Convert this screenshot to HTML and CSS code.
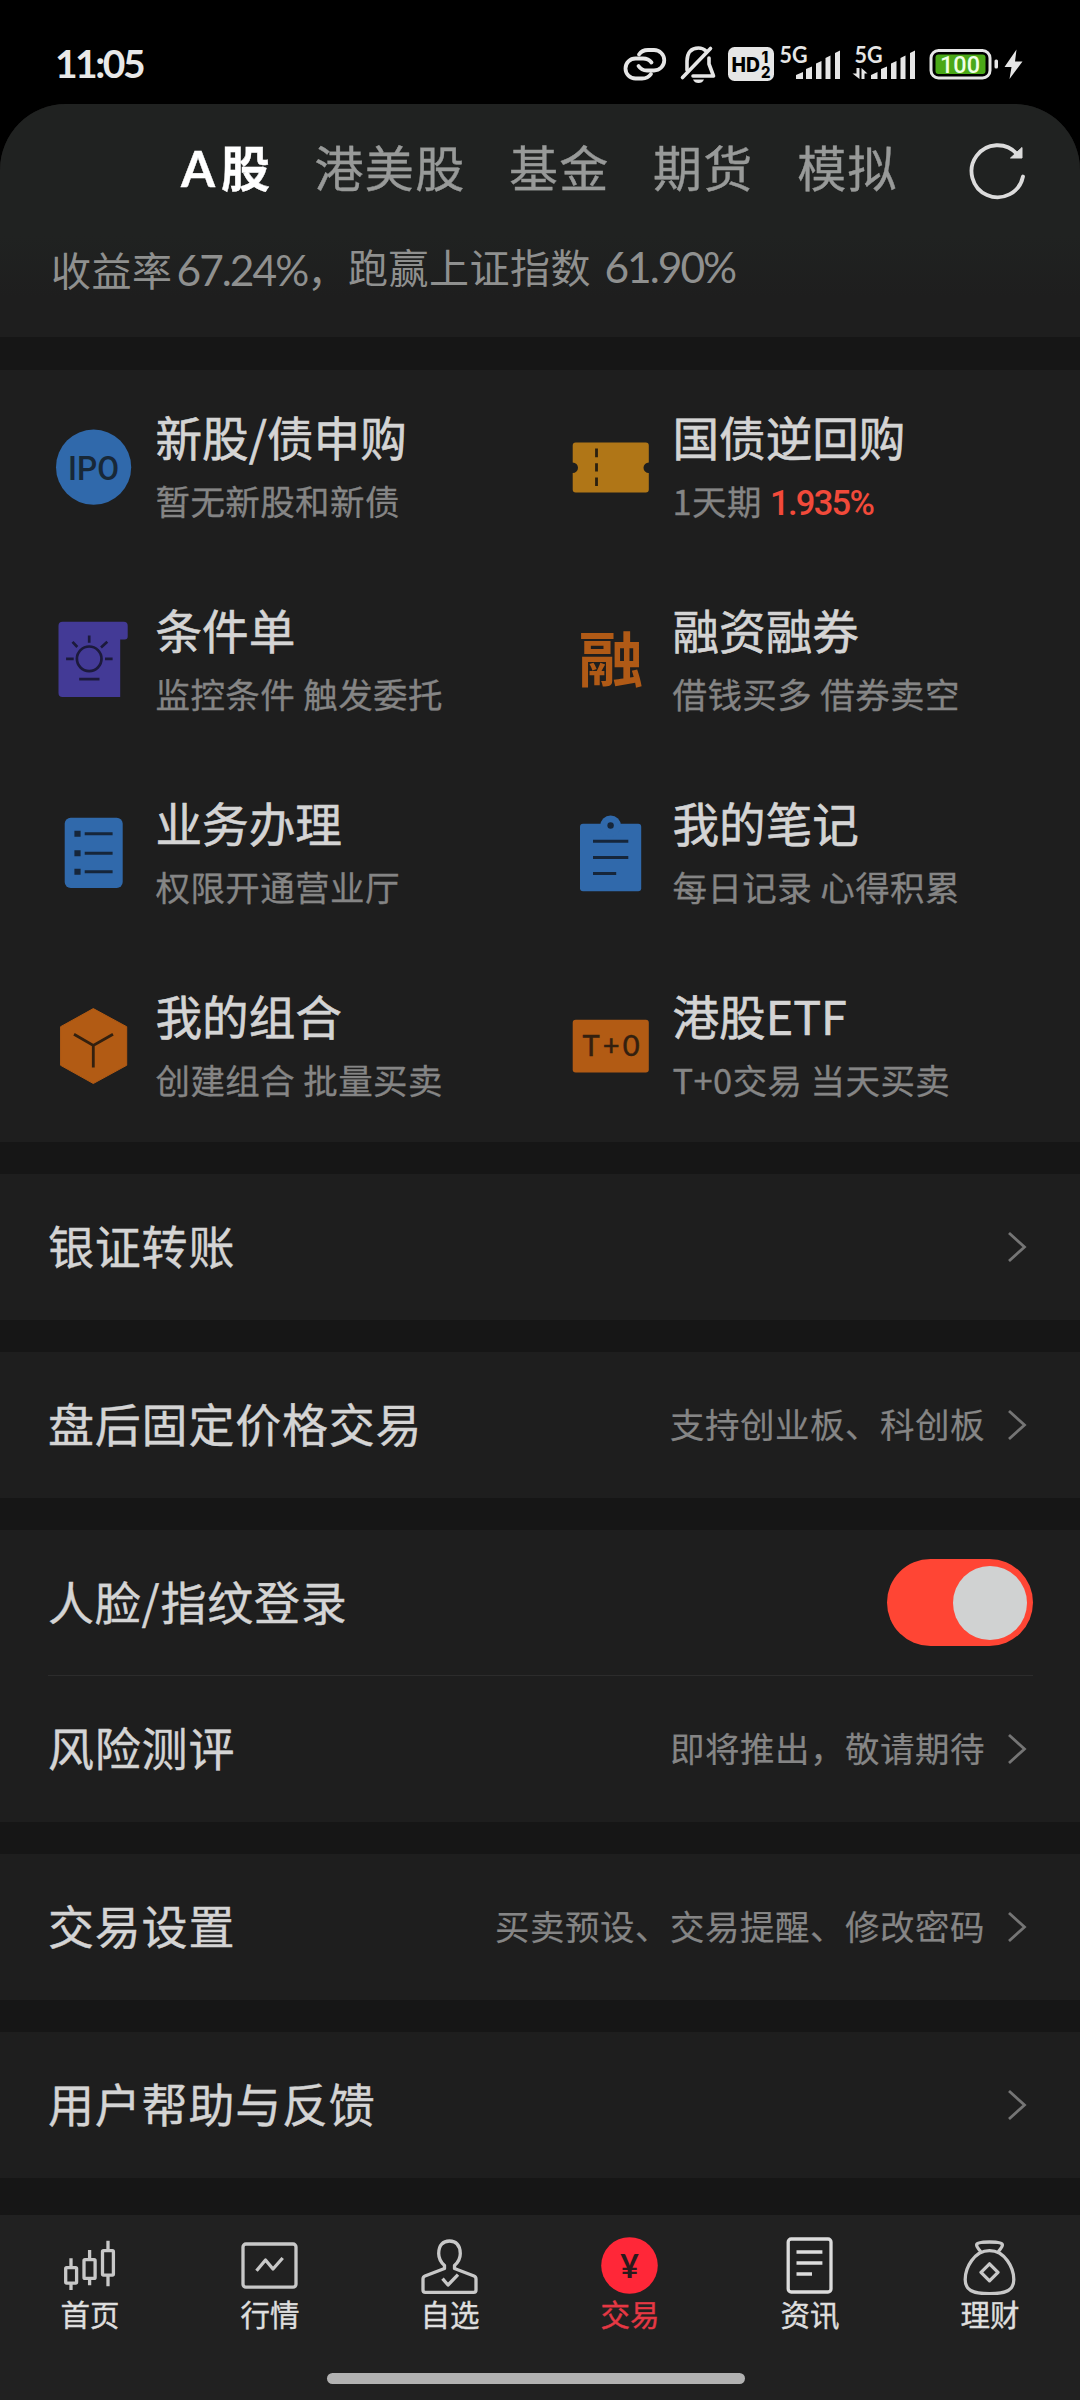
FILE: index.html
```html
<!DOCTYPE html>
<html lang="zh-CN">
<head>
<meta charset="utf-8">
<title>交易</title>
<link rel="stylesheet" href="styles.css">
</head>
<body>
<div class="screen">
  <header class="status">
    <span class="clock">11:05</span>
    <svg class="status-icons" viewBox="620 40 410 50" width="410" height="50">
      <g fill="none" stroke="#e6e6e6" stroke-width="3.8" stroke-linecap="round">
        <path d="M639 54.5 Q642 50 648 50 H654 A10 10 0 0 1 654 70.500 H647 Q641.500 70.500 638.500 66"/>
        <path d="M651 74 Q648 78.500 642 78.500 H635.500 A10 10 0 0 1 635.500 58.500 H643 Q648.500 58.500 651.500 62.500"/>
      </g>
      <g fill="none" stroke="#e6e6e6" stroke-width="3.6" stroke-linecap="round" stroke-linejoin="round">
        <path d="M687 70 V61 Q687.500 48 698.500 48 Q703 48 706 51"/>
        <path d="M709 58 V64 L713.500 76 H693"/>
        <path d="M682.500 77.500 L710.500 48.500"/>
      </g>
      <path d="M693 79.500 H704 Q702.500 83 698.500 83 T693 79.500 Z" fill="#e6e6e6"/>
      <rect x="728" y="47" width="46" height="34" rx="6.500" fill="#e6e6e6"/>
      <text class="t-heavy" x="731.500" y="71.500" font-size="20.500" textLength="28.500" lengthAdjust="spacingAndGlyphs" fill="#000">HD</text>
      <text class="t-heavy" x="761.500" y="62.500" font-size="15.500" fill="#000">1</text>
      <text class="t-heavy" x="761" y="77.500" font-size="15.500" textLength="9.500" lengthAdjust="spacingAndGlyphs" fill="#000">2</text>
      <g class="t-bold" font-size="22" fill="#e6e6e6">
        <text x="779.500" y="62.500" textLength="28" lengthAdjust="spacingAndGlyphs">5G</text>
        <text x="854.500" y="62.500" textLength="28" lengthAdjust="spacingAndGlyphs">5G</text>
      </g>
      <g fill="#e6e6e6">
        <path d="M796 79 V75 L803 72 V79 Z M806 79 V69 L812 66.500 V79 Z M816 79 V63.500 L821.500 61 V79 Z M825.500 79 V58 L830.500 55.500 V79 Z M835 79 V53 L840 50.500 V79 Z"/>
        <path d="M871 79 V75 L877.500 72 V79 Z M881 79 V69 L887 66.500 V79 Z M891 79 V63.500 L896.500 61 V79 Z M900.500 79 V58 L905.500 55.500 V79 Z M910 79 V53 L915 50.500 V79 Z"/>
        <path d="M856.500 68 H859.500 V79 L852.500 73.500 H856.500 Z M861.500 68 L867.500 73.500 H864.500 V79 H861.500 Z"/>
        <rect x="994.500" y="59.500" width="3.500" height="9" rx="1.500"/>
        <path d="M1016.500 49.500 L1004.500 67 H1011.500 L1009.500 79 L1022.500 61.500 H1015 Z"/>
      </g>
      <rect x="931" y="50.500" width="59" height="27.500" rx="7.500" fill="none" stroke="#e6e6e6" stroke-width="3"/>
      <rect x="935.500" y="54.500" width="50" height="19.500" rx="3" fill="#4aa817"/>
      <text class="t-med" x="940" y="72.500" font-size="23.500" textLength="40" lengthAdjust="spacingAndGlyphs" fill="#efffe4">100</text>
    </svg>
  </header>

  <main class="panel">
    <nav class="tabs">
      <span class="tab tab-on">A股</span>
      <span class="tab">港美股</span>
      <span class="tab">基金</span>
      <span class="tab">期货</span>
      <span class="tab">模拟</span>
      <svg class="refresh" viewBox="0 0 60 60" width="60" height="60">
        <path d="M56 36.500 A26 26 0 1 1 50 14" fill="none" stroke="#dcdcdc" stroke-width="3.800" stroke-linecap="round"/>
        <path d="M55 7.500 V18 H43.500 Z" fill="#dcdcdc" stroke="#dcdcdc" stroke-width="1" stroke-linejoin="round"/>
      </svg>
    </nav>
    <div class="summary">
      <span class="gain">收益率<span class="num">67.24%</span>，</span><span class="index">跑赢上证指数 <span class="num">61.90%</span></span>
    </div>

    <section class="grid">
      <div class="cell">
        <svg class="icon" viewBox="0 0 80 80"><circle cx="39.600" cy="40.200" r="37.600" fill="#3069ab"/><text class="t-med" x="14" y="52.600" font-size="34" textLength="51" lengthAdjust="spacingAndGlyphs" fill="#182838">IPO</text></svg>
        <div class="words"><div class="title">新股/债申购</div><div class="sub">暂无新股和新债</div></div>
      </div>
      <div class="cell">
        <svg class="icon" viewBox="0 0 80 80"><path d="M4.700 15.500 H74.800 a3 3 0 0 1 3 3 V35.500 a5.300 5.300 0 0 0 0 10.600 V62.500 a3 3 0 0 1 -3 3 H4.700 a3 3 0 0 1 -3 -3 V46.100 a5.300 5.300 0 0 0 0 -10.600 V18.500 a3 3 0 0 1 3 -3 Z" fill="#b07617"/><path d="M25.500 21.500 V30.200 M25.500 36.300 V44.600 M25.500 50.500 V59" stroke="#2a2010" stroke-width="2.800"/></svg>
        <div class="words"><div class="title">国债逆回购</div><div class="sub">1天期 <span class="rate">1.935%</span></div></div>
      </div>
      <div class="cell">
        <svg class="icon" viewBox="0 0 80 80"><path d="M8.500 1.800 H69.700 a4 4 0 0 1 4 4 V16.500 a3 3 0 0 1 -3 3 H66.200 V77 H8.500 a4 4 0 0 1 -4 -4 V5.800 a4 4 0 0 1 4 -4 Z" fill="#433a96"/><g fill="none" stroke="#1c1a3c" stroke-width="2.700"><circle cx="35.200" cy="38.800" r="12.300"/><path d="M25.200 59.200 H45.500 M35.200 15.500 V22.800 M12.100 38.800 H19.700 M51 38.800 H58.600 M18.500 21.800 L23.300 27 M53.300 21.800 L47 27.500"/></g></svg>
        <div class="words"><div class="title">条件单</div><div class="sub">监控条件 触发委托</div></div>
      </div>
      <div class="cell">
        <svg class="icon" viewBox="0 0 80 80"><text class="t-cjk" transform="translate(7.500 61.800) scale(1 .93)" x="0" y="0" font-size="65" fill="#b05a16">融</text></svg>
        <div class="words"><div class="title">融资融券</div><div class="sub">借钱买多 借券卖空</div></div>
      </div>
      <div class="cell">
        <svg class="icon" viewBox="0 0 80 80"><rect x="10.700" y="4.800" width="58" height="70.200" rx="6" fill="#3069ab"/><path d="M20.400 17.800 h6.200 v6 h-6.200 Z M20.400 37.200 h6.200 v6 h-6.200 Z M20.400 55.800 h6.200 v6 h-6.200 Z" fill="#16263a"/><path d="M30.700 20.800 H58.600 M30.700 40.200 H58.600 M30.700 58.800 H58.600" stroke="#16263a" stroke-width="3"/></svg>
        <div class="words"><div class="title">业务办理</div><div class="sub">权限开通营业厅</div></div>
      </div>
      <div class="cell">
        <svg class="icon" viewBox="0 0 80 80"><rect x="9" y="10.800" width="61.200" height="67.500" rx="3" fill="#3069ab"/><circle cx="39.600" cy="12.800" r="10.400" fill="#3069ab"/><circle cx="39.600" cy="12.500" r="3.200" fill="#16263a"/><path d="M22 28.200 H57.300 M22 44.500 H57.300 M22 60.500 H45.200" stroke="#16263a" stroke-width="3"/></svg>
        <div class="words"><div class="title">我的笔记</div><div class="sub">每日记录 心得积累</div></div>
      </div>
      <div class="cell">
        <svg class="icon" viewBox="0 0 80 80"><path d="M39.300 2.600 L72.700 20.700 V59.300 L39.300 77.500 L6.600 59.300 V20.700 Z" fill="#b25b14" stroke="#b25b14" stroke-width="1" stroke-linejoin="round"/><path d="M20 28.200 L39.300 39.500 L59 28.200 M39.300 39.500 V61.500" fill="none" stroke="#33200f" stroke-width="2.800"/></svg>
        <div class="words"><div class="title">我的组合</div><div class="sub">创建组合 批量买卖</div></div>
      </div>
      <div class="cell">
        <svg class="icon" viewBox="0 0 80 80"><rect x="1.700" y="13.800" width="76.100" height="52.600" rx="3" fill="#b25b14"/><text class="t-lato" x="11.500" y="50.300" font-size="29" textLength="57" fill="#33200f" stroke="#33200f" stroke-width=".5">T+0</text></svg>
        <div class="words"><div class="title">港股ETF</div><div class="sub">T+0交易 当天买卖</div></div>
      </div>
    </section>

    <section class="group">
      <div class="row"><span class="label">银证转账</span><svg class="chev" viewBox="0 0 20 32"><path d="M2 2 L17.500 16 L2 30"/></svg></div>
    </section>
    <section class="group">
      <div class="row"><span class="label">盘后固定价格交易</span><span class="hint">支持创业板、科创板</span><svg class="chev" viewBox="0 0 20 32"><path d="M2 2 L17.500 16 L2 30"/></svg></div>
    </section>
    <section class="group">
      <div class="row"><span class="label">人脸/指纹登录</span><span class="toggle"><span class="knob"></span></span></div>
      <div class="row row-next"><span class="label">风险测评</span><span class="hint">即将推出，敬请期待</span><svg class="chev" viewBox="0 0 20 32"><path d="M2 2 L17.500 16 L2 30"/></svg></div>
    </section>
    <section class="group">
      <div class="row"><span class="label">交易设置</span><span class="hint">买卖预设、交易提醒、修改密码</span><svg class="chev" viewBox="0 0 20 32"><path d="M2 2 L17.500 16 L2 30"/></svg></div>
    </section>
    <section class="group">
      <div class="row"><span class="label">用户帮助与反馈</span><svg class="chev" viewBox="0 0 20 32"><path d="M2 2 L17.500 16 L2 30"/></svg></div>
    </section>
  </main>

  <footer class="dock">
    <div class="dock-items">
      <div class="dock-item"><svg class="dock-icon" viewBox="0 0 60 60"><path d="M11 23.300 V32 M11 49 V55 M29.600 15 V24 M29.600 44 V50.300 M48 5.700 V15 M48 41 V51.300"/><rect x="5.700" y="32.600" width="10.900" height="15.500" rx="1"/><rect x="24" y="24.700" width="11.100" height="18.700" rx="1"/><rect x="42.500" y="15.700" width="10.900" height="24.400" rx="1"/></svg><span>首页</span></div>
      <div class="dock-item"><svg class="dock-icon" viewBox="0 0 60 60"><rect x="3" y="9" width="53" height="43.200" rx="3"/><path d="M16.500 35.700 L25.500 25 L33 34 L42.700 23"/></svg><span>行情</span></div>
      <div class="dock-item"><svg class="dock-icon" viewBox="0 0 60 60"><path d="M24.500 33.500 V30.500 C20.500 27 18.700 23 18.700 18.500 C18.700 10 23 6 29.500 6 S40.300 10 40.300 18.500 C40.300 23 38.500 27 34.500 30.500 V33.500 L54 41 q2 .8 2 3 V55 q0 2.300 -2.300 2.300 H5.300 q-2.300 0 -2.300 -2.300 V44 q0 -2.200 2 -3 Z"/><path d="M22.500 43.700 L28 50 L38 39.700"/></svg><span>自选</span></div>
      <div class="dock-item dock-on"><svg class="dock-icon" viewBox="0 0 60 60"><circle cx="29.500" cy="30.500" r="28.300" fill="#ff2738" stroke="none"/><text class="t-bold" x="29.500" y="42.500" font-size="32" text-anchor="middle" fill="#2a1a1c" stroke="none">¥</text></svg><span>交易</span></div>
      <div class="dock-item"><svg class="dock-icon dock-icon-bright" viewBox="0 0 60 60"><rect x="8.200" y="4" width="42.800" height="53" rx="3"/><path d="M16.500 17 H42.400 M16.500 28 H42.400 M16.500 39 H32"/></svg><span>资讯</span></div>
      <div class="dock-item"><svg class="dock-icon" viewBox="0 0 60 60"><path d="M29.500 15.700 C14 15.700 5.200 33 5.200 44.500 C5.200 55 12 58.700 29.500 58.700 S53.800 55 53.800 44.500 C53.800 33 45 15.700 29.500 15.700 Z M21 17.500 C19.500 14 16.600 13 16.600 10 C16.600 7.500 24 7 29.500 7 S42.400 7.500 42.400 10 C42.400 13 39.500 14 38 17.500 M29.500 28.800 L38 37.300 L29.500 45.800 L21 37.300 Z"/></svg><span>理财</span></div>
    </div>
    <div class="home-bar"></div>
  </footer>
</div>
</body>
</html>
```
FILE: styles.css
```css
* { box-sizing: border-box; }

body {
  margin: 0;
  background: #000;
  font-family: "Noto Sans CJK SC", sans-serif;
  color: #d4d4d4;
}

.screen {
  width: 1080px;
  height: 2400px;
  display: flex;
  flex-direction: column;
  overflow: hidden;
  white-space: nowrap;
}

/* status bar */
.status {
  height: 104px;
  flex: none;
  display: flex;
  justify-content: space-between;
  padding: 40px 50px 14px 55px;
}
.clock {
  margin-top: -2px;
  font: 700 39px/50px Lato, sans-serif;
  letter-spacing: -2.5px;
  color: #e8e8e8;
}
.t-heavy { font-family: Inter, sans-serif; font-weight: 800; }
.t-bold { font-family: Lato, sans-serif; font-weight: 700; }
.t-med { font-family: Roboto, sans-serif; font-weight: 500; }
.t-lato { font-family: Lato, sans-serif; }
.t-cjk { font-family: "Noto Sans CJK SC", sans-serif; font-weight: 700; }

/* content panel */
.panel {
  flex: 1;
  background: #161616;
  border-radius: 66px 66px 0 0;
  overflow: hidden;
}
.tabs {
  height: 132px;
  padding: 0 53px 0 181px;
  display: flex;
  align-items: center;
  gap: 43.5px;
  background: #202221;
  font-family: Lato, "Noto Sans CJK SC", sans-serif;
  font-size: 49px;
  line-height: 60px;
  letter-spacing: 1.300px;
  color: #989a99;
  -webkit-text-stroke: .4px;
}
.tab { padding-bottom: 4px; }
.tab-on {
  color: #fff;
  font-weight: 700;
  letter-spacing: 6px;
  margin-right: -5px;
}
.refresh { margin-left: auto; }

.summary {
  height: 101px;
  padding: 3px 0 0 51px;
  display: flex;
  background: linear-gradient(#202221, #1e1e1e 60%);
  font-size: 40px;
  letter-spacing: .5px;
  line-height: 54px;
  color: #8f908f;
}
.gain { padding-top: 3px; width: 297px; }
.num {
  margin-left: 4px;
  font-family: Lato, sans-serif;
  font-size: 42.500px;
  letter-spacing: -2px;
}

/* feature grid */
.grid {
  margin-top: 33px;
  display: grid;
  grid-template-columns: 517px 1fr;
  grid-auto-rows: 193px;
  padding-left: 54px;
  background: #1e1e1e;
}
.cell {
  display: flex;
  align-items: center;
  gap: 21.5px;
}
.icon { width: 80px; height: 80px; flex: none; overflow: visible; }
.words { padding-top: 3px; }
.title {
  font-size: 46.600px;
  line-height: 64px;
  -webkit-text-stroke: .6px;
}
.sub {
  height: 64px;
  font-size: 34.500px;
  letter-spacing: .4px;
  line-height: 64px;
  color: #858585;
  -webkit-text-stroke: .3px;
}
.rate {
  font-family: Roboto, sans-serif;
  font-weight: 500;
  font-size: 34.500px;
  line-height: 1;
  letter-spacing: -1.700px;
  color: #f24a3a;
  -webkit-text-stroke: 0;
}

/* list rows */
.group {
  margin-top: 32px;
  padding: 0 47px 0 48px;
  background: #1e1e1e;
}
.row {
  height: 146px;
  display: flex;
  align-items: center;
}
.row-next { box-shadow: 0 -1px #2c2c2c; }
.label {
  margin-right: auto;
  padding-bottom: 6px;
  font-size: 46px;
  letter-spacing: .8px;
  line-height: 64px;
  -webkit-text-stroke: .4px;
}
.hint {
  margin-right: 22px;
  padding-bottom: 4px;
  font-size: 34.500px;
  letter-spacing: .5px;
  line-height: 50px;
  color: #858585;
  -webkit-text-stroke: .2px;
}
.chev {
  width: 20px;
  height: 32px;
  margin-right: 6px;
  fill: none;
  stroke: #757575;
  stroke-width: 2.800px;
}
.toggle {
  width: 146px;
  height: 87px;
  padding: 6px;
  margin-bottom: 1px;
  border-radius: 44px;
  background: #ff4534;
  display: flex;
  align-items: center;
  justify-content: flex-end;
}
.knob { width: 74px; height: 74px; border-radius: 50%; background: #d0d2d2; }

/* bottom navigation */
.dock {
  height: 185px;
  flex: none;
  padding-top: 20px;
  background: #212121;
}
.dock-items {
  height: 138px;
  display: grid;
  grid-template-columns: repeat(6, 180px);
}
.dock-item {
  display: flex;
  flex-direction: column;
  align-items: center;
  font-size: 29.500px;
  line-height: 36px;
  color: #dedede;
  -webkit-text-stroke: .4px;
}
.dock-icon {
  width: 60px;
  height: 60px;
  fill: none;
  stroke: #c8c8c8;
  stroke-width: 3.300px;
  stroke-linejoin: round;
}
.dock-icon-bright { stroke: #dcdcdc; }
.dock-on { color: #e63844; }
.home-bar {
  width: 418px;
  height: 11px;
  margin: 0 0 0 327px;
  border-radius: 6px;
  background: #b2b2b2;
}
```
